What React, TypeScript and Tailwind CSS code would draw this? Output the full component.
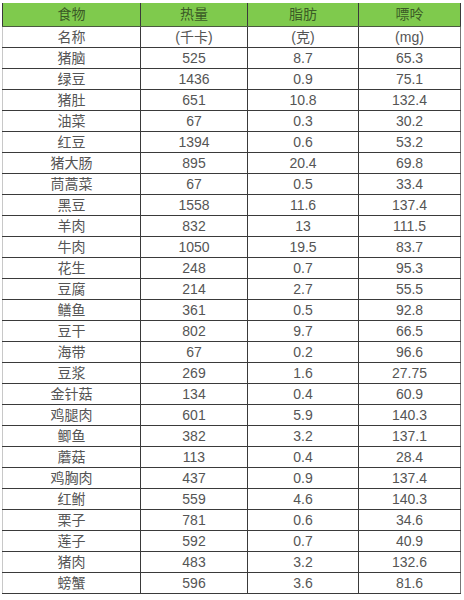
import React from 'react';

const rows: [string, string, string, string][] = [
  ['名称', '(千卡)', '(克)', '(mg)'],
  ['猪脑', '525', '8.7', '65.3'],
  ['绿豆', '1436', '0.9', '75.1'],
  ['猪肚', '651', '10.8', '132.4'],
  ['油菜', '67', '0.3', '30.2'],
  ['红豆', '1394', '0.6', '53.2'],
  ['猪大肠', '895', '20.4', '69.8'],
  ['茼蒿菜', '67', '0.5', '33.4'],
  ['黑豆', '1558', '11.6', '137.4'],
  ['羊肉', '832', '13', '111.5'],
  ['牛肉', '1050', '19.5', '83.7'],
  ['花生', '248', '0.7', '95.3'],
  ['豆腐', '214', '2.7', '55.5'],
  ['鳝鱼', '361', '0.5', '92.8'],
  ['豆干', '802', '9.7', '66.5'],
  ['海带', '67', '0.2', '96.6'],
  ['豆浆', '269', '1.6', '27.75'],
  ['金针菇', '134', '0.4', '60.9'],
  ['鸡腿肉', '601', '5.9', '140.3'],
  ['鲫鱼', '382', '3.2', '137.1'],
  ['蘑菇', '113', '0.4', '28.4'],
  ['鸡胸肉', '437', '0.9', '137.4'],
  ['红鲋', '559', '4.6', '140.3'],
  ['栗子', '781', '0.6', '34.6'],
  ['莲子', '592', '0.7', '40.9'],
  ['猪肉', '483', '3.2', '132.6'],
  ['螃蟹', '596', '3.6', '81.6'],
];

const cell = 'border border-[#3a3a3a] p-0 text-center align-middle leading-none';

const App = () => {
  return (
    <div className="w-[464px] h-[600px] bg-white pt-[3px] pl-[2px] font-['Liberation_Sans','Noto_Sans_CJK_SC',sans-serif] text-[14px] text-[#555]">
      <table className="border-collapse table-fixed w-[458px] border-l border-l-[#c8c8c8]">
        <colgroup>
          <col className="w-[138px]" />
          <col className="w-[107px]" />
          <col className="w-[111px]" />
          <col className="w-[102px]" />
        </colgroup>
        <thead>
          <tr className="h-[23px] bg-[#7fca4d] text-[#3b5a26]">
            <th className="border-x border-x-[#3a3a3a] border-b border-b-[#4a5a40] font-normal p-0 text-center">食物</th>
            <th className="border-x border-x-[#3a3a3a] border-b border-b-[#4a5a40] font-normal p-0 text-center">热量</th>
            <th className="border-x border-x-[#3a3a3a] border-b border-b-[#4a5a40] font-normal p-0 text-center">脂肪</th>
            <th className="border-x border-x-[#3a3a3a] border-b border-b-[#4a5a40] font-normal p-0 text-center">嘌呤</th>
          </tr>
        </thead>
        <tbody>
          {rows.map((r, i) => (
            <tr key={i} className="h-[21px]">
              <td className={cell + ' border-l-[#c8c8c8]'}>{r[0]}</td>
              <td className={cell}>{r[1]}</td>
              <td className={cell}>{r[2]}</td>
              <td className={cell + ' border-r-[#777]'}>{r[3]}</td>
            </tr>
          ))}
        </tbody>
      </table>
    </div>
  );
};

export default App;
